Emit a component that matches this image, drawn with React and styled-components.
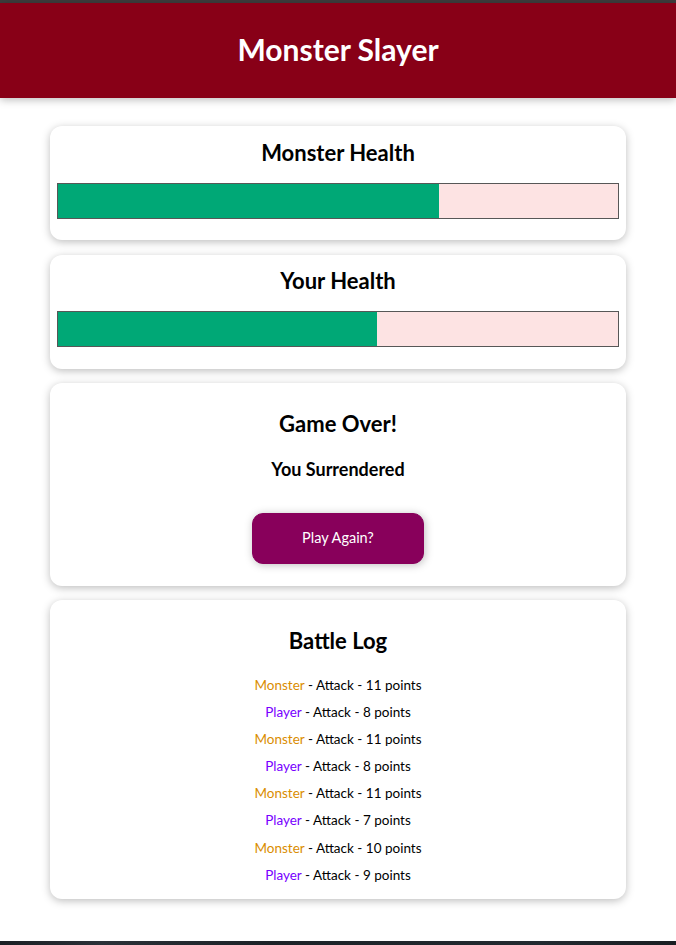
import React from 'react'
import styled, { createGlobalStyle } from 'styled-components'

const GlobalStyle = createGlobalStyle`
* {
    box-sizing: border-box;
}
html {
    font-family: Lato, "Noto Sans", sans-serif;
    font-size: 14.4px;
}
body {
    margin: 0;
    background: #ffffff;
}
`

const log = [
    { who: 'monster', value: 11 },
    { who: 'player', value: 8 },
    { who: 'monster', value: 11 },
    { who: 'player', value: 8 },
    { who: 'monster', value: 11 },
    { who: 'player', value: 7 },
    { who: 'monster', value: 10 },
    { who: 'player', value: 9 },
]

function HealthCard({ title, value }) {
    return (
        <Card>
            <BarTitle>{title}</BarTitle>
            <HealthBar>
                <HealthValue style={{ width: value + '%' }} />
            </HealthBar>
        </Card>
    )
}

function App() {
    return (
        <Page>
            <GlobalStyle />
            <TopEdge />
            <Header>
                <Title>Monster Slayer</Title>
            </Header>
            <Main>
                <HealthCard title="Monster Health" value={68} />
                <HealthCard title="Your Health" value={57} />
                <Card>
                    <Heading>Game Over!</Heading>
                    <Result>You Surrendered</Result>
                    <Button>Play Again?</Button>
                </Card>
                <Card>
                    <Heading>Battle Log</Heading>
                    <LogList>
                        {log.map((entry, i) => (
                            <LogItem key={i}>
                                <Actor who={entry.who}>{entry.who === 'monster' ? 'Monster' : 'Player'}</Actor>
                                {' '}- Attack - {entry.value} points
                            </LogItem>
                        ))}
                    </LogList>
                </Card>
            </Main>
            <BottomEdge />
        </Page>
    )
}

export default App

const Page = styled.div`
display: flex;
flex-direction: column;
min-height: 945px;
`

const TopEdge = styled.div`
height: 3px;
background: #3d3d3d;
`

const BottomEdge = styled.div`
margin-top: auto;
height: 4px;
background: linear-gradient(90deg, #1b1f24, #2b3138 15%, #1c2227 40%, #232a30 80%, #1a1e22);
`

const Header = styled.header`
text-align: center;
background-color: #880017;
color: white;
padding: 7.2px;
box-shadow: 0 2px 8px rgba(0, 0, 0, 0.26);
margin-bottom: 28.8px;
position: relative;
`

const Title = styled.h1`
font-size: 30px;
font-weight: 700;
line-height: 41.6px;
margin: 19.3px 0;
`

const Main = styled.main`
width: 576px;
margin: 0 auto;
display: flex;
flex-direction: column;
gap: 14.4px;
padding-bottom: 14.4px;
`

const Card = styled.section`
text-align: center;
padding: 7.2px;
box-shadow: 0 2px 8px rgba(0, 0, 0, 0.26);
border-radius: 12px;
background: #fff;
display: flex;
flex-direction: column;
align-items: center;
`

const BarTitle = styled.h2`
font-size: 22px;
font-weight: 700;
line-height: 31.2px;
margin: 3.6px 0 14.4px;
`

const Heading = styled.h2`
font-size: 22px;
font-weight: 700;
line-height: 31.2px;
margin: 17.9px 0;
`

const Result = styled.h3`
font-size: 18px;
font-weight: 700;
line-height: 24.3px;
margin: 0 0 31.3px;
`

const HealthBar = styled.div`
align-self: stretch;
height: 36px;
border: 1px solid #575757;
margin-bottom: 14.4px;
background: #fde3e3;
`

const HealthValue = styled.div`
height: 100%;
background-color: #00a876;
`

const Button = styled.button`
font: inherit;
font-size: 14.5px;
line-height: 20.8px;
border: 1px solid #88005b;
background-color: #88005b;
color: white;
padding: 14.4px 28.8px;
border-radius: 11px;
margin-bottom: 14.4px;
width: 172.8px;
cursor: pointer;
box-shadow: 1px 1px 8px rgba(0, 0, 0, 0.26);
`

const LogList = styled.ul`
list-style: none;
margin: 0;
padding: 0;
display: flex;
flex-direction: column;
gap: 7.2px;
margin-bottom: 7.2px;
`

const LogItem = styled.li`
font-size: 13.5px;
line-height: 20px;
color: #000;
`

const Actor = styled.span`
color: ${(props) => (props.who === 'monster' ? '#da8d00' : '#7700ff')};
`
